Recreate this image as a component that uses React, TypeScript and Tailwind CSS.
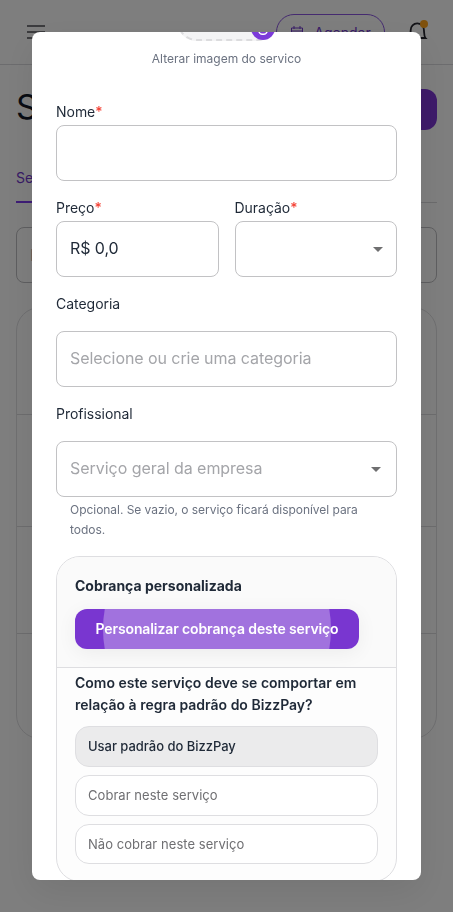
import React, { useState } from "react";

const rules = ["Usar padrão do BizzPay", "Cobrar neste serviço", "Não cobrar neste serviço"];

const inputClasses =
  "h-14 w-full rounded-lg border border-[#c2c2c4] bg-white px-[13px] pb-0.5 text-base leading-6 tracking-[-0.07px] text-[#1f2937] placeholder-[#a4a5a9] outline-none";

const Caret: React.FunctionComponent = () => (
  <svg viewBox="0 0 24 24" className="h-6 w-6 fill-[#6f6f70]" aria-hidden="true">
    <path d="m7 10 5 5 5-5z" />
  </svg>
);

const FieldLabel: React.FunctionComponent<{ text: string; required?: boolean }> = ({ text, required }) => (
  <label className="block text-sm leading-[21px] tracking-[-0.03px] text-[#1f2937]">
    {text}
    {required && <span className="font-medium text-[#f44336]">*</span>}
  </label>
);

const SelectBox: React.FunctionComponent<{ placeholder?: string; padding: string }> = ({ placeholder, padding }) => (
  <button
    type="button"
    className={`flex h-14 w-full items-center justify-between rounded-lg border border-[#c2c2c4] bg-white pl-[13px] text-base text-[#a4a5a9] ${padding}`}
  >
    <span className="pb-0.5 tracking-[-0.04px]">{placeholder}</span>
    <Caret />
  </button>
);

const ServicesPage: React.FunctionComponent = () => (
  <div className="h-[912px] overflow-hidden bg-[#fdfdfd] text-[#1f2937]">
    <header className="flex h-[65px] items-start justify-between border-b border-[#d9d9dc] pt-[14px] pr-[23px] pl-6">
      <svg viewBox="0 0 24 24" className="mt-[6px] h-6 w-6 fill-none stroke-[#77777c] stroke-2">
        <path d="M3 6h18M3 12h18M3 18h18" />
      </svg>
      <div className="flex items-start gap-[21px]">
        <button
          type="button"
          className="flex h-9 w-[109px] items-center justify-center gap-[10px] rounded-full border border-[#8a55e0] pt-px text-sm text-[#7038cc]"
        >
          <svg viewBox="0 0 14 16" className="h-4 w-3.5 fill-none stroke-current">
            <path d="M1.5 3h11v11h-11zM1.5 6h11M4 1v3M10 1v3" />
          </svg>
          Agendar
        </button>
        <div className="relative mt-[5px]">
          <svg viewBox="0 0 24 24" className="h-6 w-6 fill-none stroke-[#26262e] stroke-[1.8]">
            <path d="M3 19h16.5c-1.6-1.7-1.2-5-1.6-8.200A6.600 6.600 0 0 0 4.700 11C4.500 14 4.600 17.300 3 19zM9 22h4" />
          </svg>
          <span className="absolute top-[1px] right-0.5 h-2 w-2 rounded-full bg-[#ffa31a]" />
        </div>
      </div>
    </header>
    <div className="px-4">
      <div className="mt-6 flex h-[41px] items-center justify-between">
        <h1 className="pb-1.5 text-[34px] text-[#111827]">Serviços</h1>
        <button type="button" className="h-full w-32 rounded-xl bg-[#7c35d4]" aria-label="Novo serviço" />
      </div>
      <div className="mt-[25px] h-12 border-b border-[#d6d6d9]">
        <div className="h-12 w-20 border-b-2 border-[#7c3aed] pt-[11px] text-sm leading-6 text-[#7038cc]">Serviços</div>
      </div>
      <div className="mt-6 flex h-14 items-center rounded-lg border border-[#bdbdc1] pl-[13px] text-[#a4a5a9]">
        Pesquisar
      </div>
      <div className="mt-6 flex h-[432px] flex-col rounded-3xl border border-[#dedee1]">
        <div className="h-[107px] border-b border-[#dadadd]" />
        <div className="h-[112px] border-b border-[#dadadd]" />
        <div className="h-[107px] border-b border-[#dadadd]" />
      </div>
    </div>
  </div>
);

const ServiceModal: React.FunctionComponent = () => {
  const [name, setName] = useState("");
  const [price, setPrice] = useState("R$ 0,0");
  const [rule, setRule] = useState(rules[0]);

  return (
    <div className="fixed inset-0 z-10 bg-black/50 p-8">
      <div
        role="dialog"
        aria-modal="true"
        className="flex h-[848px] flex-col overflow-hidden rounded-lg bg-white px-6 shadow-[0_12px_36px_rgba(0,0,0,0.08)]"
      >
        <div className="flex flex-col items-center">
          <div className="relative -mt-[88px] h-[97px] w-[100px] shrink-0 rounded-[20px] border-2 border-dashed border-[#dcdcde] bg-[#f4f4f5]">
            <div className="absolute right-0 -bottom-[1px] flex h-6 w-6 items-center justify-center rounded-full bg-[#7c3bd9]">
              <svg viewBox="0 0 24 24" className="mt-0.5 h-3.5 w-3.5 fill-none stroke-white stroke-[2.5]">
                <path d="M5 7h3l2-3h4l2 3h3v8a6 6 0 0 1-6 6h-2a6 6 0 0 1-6-6z" />
                <path d="M10 14h4" />
              </svg>
            </div>
          </div>
          <span className="mt-[8px] text-xs leading-5 text-[#6b7280]">Alterar imagem do servico</span>
        </div>

        <div className="mt-8">
          <FieldLabel text="Nome" required />
          <input className={`mt-[3px] ${inputClasses}`} value={name} onChange={(e) => setName(e.target.value)} />
        </div>
        <div className="mt-4 grid grid-cols-2 gap-4">
          <div>
            <FieldLabel text="Preço" required />
            <input className={`mt-[3px] ${inputClasses}`} value={price} onChange={(e) => setPrice(e.target.value)} />
          </div>
          <div>
            <FieldLabel text="Duração" required />
            <div className="mt-[3px]">
              <SelectBox padding="pr-[6px]" />
            </div>
          </div>
        </div>
        <div className="mt-4">
          <FieldLabel text="Categoria" />
          <input className={`mt-[17px] ${inputClasses}`} placeholder="Selecione ou crie uma categoria" />
        </div>
        <div className="mt-4">
          <FieldLabel text="Profissional" />
          <div className="mt-[17px]">
            <SelectBox placeholder="Serviço geral da empresa" padding="pr-[8px]" />
          </div>
          <p className="mx-[14px] mt-[3px] text-xs leading-5 tracking-[-0.04px] text-[#6b7280]">
            Opcional. Se vazio, o serviço ficará disponível para <br />
            todos.
          </p>
        </div>

        <section className="mt-4 h-[326px] shrink-0 overflow-hidden rounded-[24px] border border-[#dedee1] bg-[#fdfdfd]">
          <div className="h-[111px] border-b border-[#dedee1] bg-[#fafafa] px-[18px] pt-[18px]">
            <h3 className="text-sm leading-[22px] font-bold text-[#1f2937]">Cobrança personalizada</h3>
            <button
              type="button"
              className="relative mt-3 flex h-10 w-[284px] items-center justify-center overflow-hidden rounded-xl bg-[#7936d0] text-sm font-semibold tracking-[-0.11px] text-white shadow-[0_4px_20px_rgba(0,0,0,0.06)]"
            >
              <span className="absolute top-1/2 left-1/2 h-[228px] w-[228px] -translate-x-1/2 -translate-y-1/2 rounded-full bg-white/30" />
              <span className="relative">Personalizar cobrança deste serviço</span>
            </button>
          </div>
          <div className="px-[18px] pt-1">
            <h3 className="text-sm leading-[22px] font-semibold text-[#1f2937]">
              Como este serviço deve se comportar em relação à regra padrão do BizzPay?
            </h3>
            <div className="mt-[10px] flex flex-col gap-2">
              {rules.map((item) => (
                <button
                  key={item}
                  type="button"
                  onClick={() => setRule(item)}
                  className={`h-[41px] rounded-[14px] border border-[#dedee1] px-3 text-left text-[13px] last:h-10 last:pt-px ${
                    item === rule
                      ? "bg-[#ebebec] font-medium tracking-[-0.03px] text-[#1f2937]"
                      : "bg-white tracking-[0.05px] text-[#6f6f72]"
                  }`}
                >
                  {item}
                </button>
              ))}
            </div>
          </div>
        </section>
      </div>
    </div>
  );
};

export default function App() {
  return (
    <div className="font-['Inter',sans-serif]">
      <ServicesPage />
      <ServiceModal />
    </div>
  );
}
